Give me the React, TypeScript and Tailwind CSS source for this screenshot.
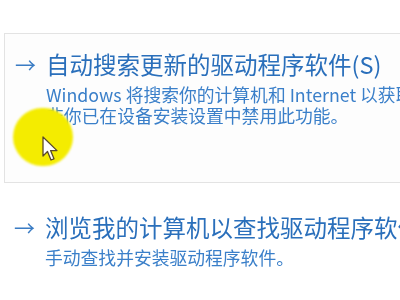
const FONT = {
  fontFamily: '"Noto Sans CJK SC", "Noto Sans", sans-serif',
};

function Option({
  title,
  lines,
  boxed,
}: {
  title: string;
  lines: string[];
  boxed?: boolean;
}) {
  return (
    <div
      className={`flex w-[600px] pl-[10px] ${
        boxed
          ? "h-[150px] border border-[#e3e3e3] bg-[#fdfdfd] pt-[14px]"
          : "pt-[0px]"
      }`}
    >
      <div className="w-[31px] shrink-0 text-[21px] leading-[32px] text-[#3a7cc4]">
        →
      </div>
      <div className="flex flex-col">
        <div className="whitespace-nowrap text-[23.5px] leading-[32px] text-[#2a6fbb]">
          {title}
        </div>
        <div className="mt-[4px] flex flex-col">
          {lines.map((l) => (
            <div
              key={l}
              className="whitespace-nowrap text-[17.8px] leading-[21px] text-[#3a7fc9]"
            >
              {l}
            </div>
          ))}
        </div>
      </div>
    </div>
  );
}

export default function App() {
  return (
    <div
      className="relative h-[300px] w-[400px] overflow-hidden bg-white"
      style={FONT}
    >
      <div className="blur-[0.4px]">
        <div className="ml-[4px] pt-[33px]">
          <Option
            boxed
            title="自动搜索更新的驱动程序软件(S)"
            lines={[
              "Windows 将搜索你的计算机和 Internet 以获取适用于你设备的最新驱动程序软件，除",
              "非你已在设备安装设置中禁用此功能。",
            ]}
          />
        </div>
        <div className="ml-[4px] pt-[28px]">
          <Option
            title="浏览我的计算机以查找驱动程序软件(R)"
            lines={["手动查找并安装驱动程序软件。"]}
          />
        </div>
      </div>

      {/* 光标高亮 */}
      <div className="absolute left-[13px] top-[108px] h-[58px] w-[60px] rounded-full bg-[#f4ec00] blur-[1px]" />
      <svg
        className="absolute left-[41px] top-[136px]"
        width="20"
        height="28"
        viewBox="0 0 20 28"
      >
        <path
          d="M2 1 L2 20 L6.5 15.5 L10 24 L13 22.8 L9.6 14.6 L16 14.6 Z"
          fill="#ffffff"
          stroke="#5a4a2a"
          strokeWidth="1.3"
          strokeLinejoin="round"
        />
      </svg>
    </div>
  );
}
